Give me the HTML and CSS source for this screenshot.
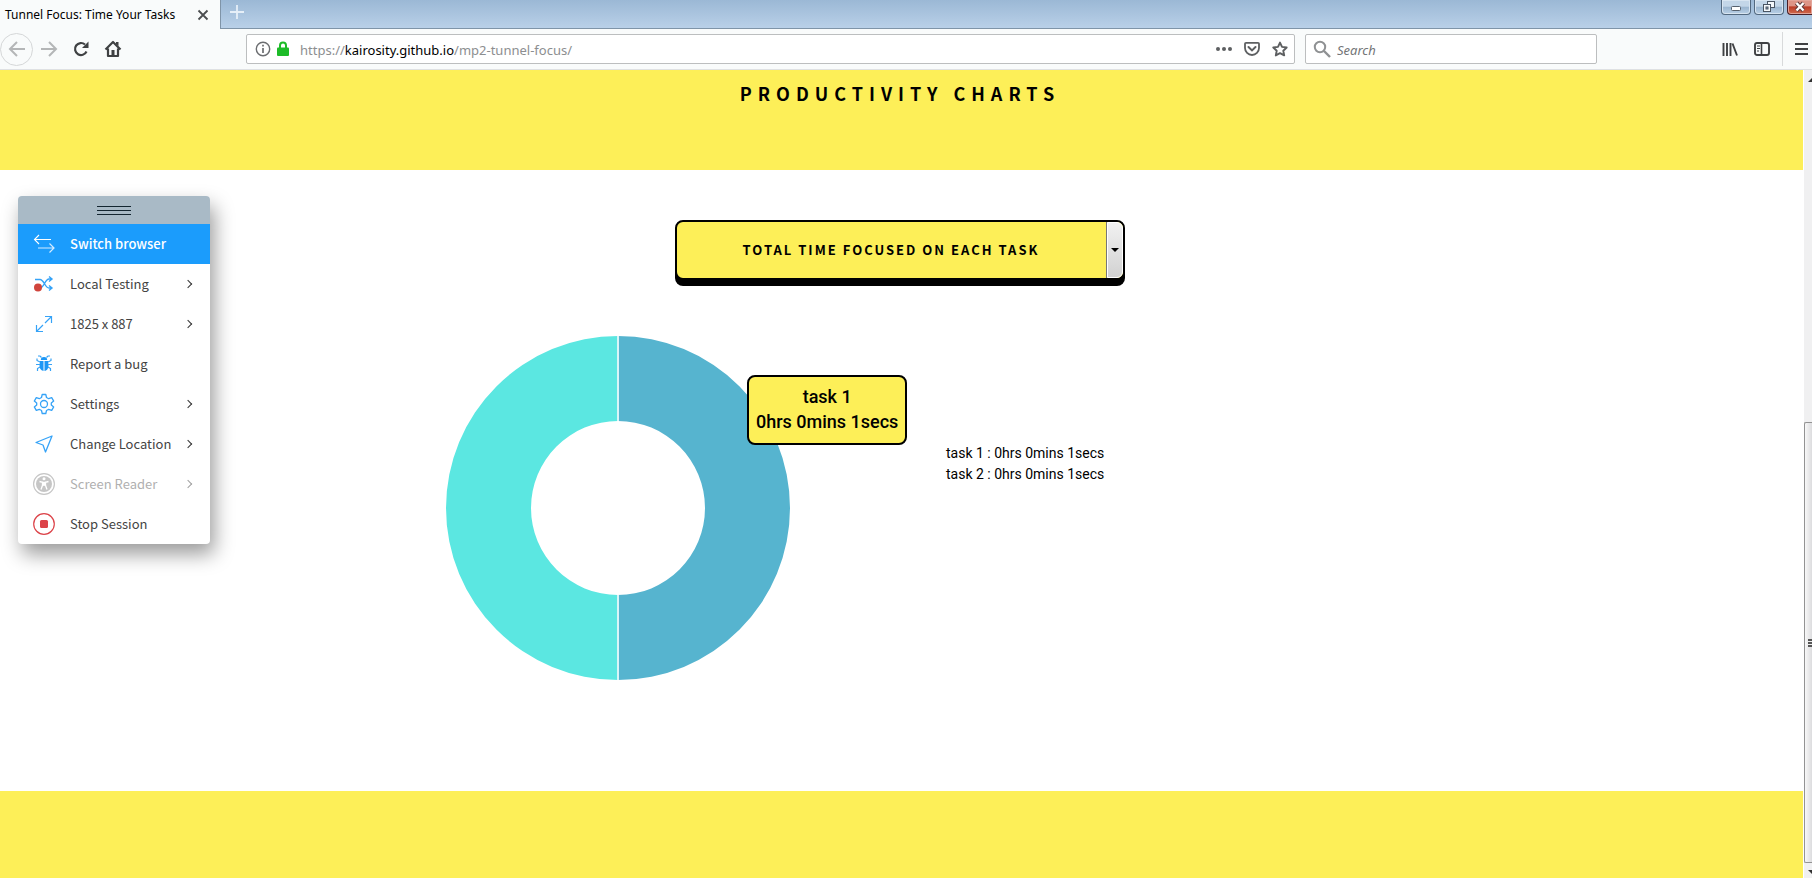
FILE: index.html
```html
<!DOCTYPE html>
<html lang="en">
<head>
<meta charset="utf-8">
<title>Tunnel Focus: Time Your Tasks</title>
<link rel="stylesheet" href="styles.css">
</head>
<body>
<header class="browser">
  <div class="tabbar">
    <div class="tab">
      <span class="tab-title">Tunnel Focus: Time Your Tasks</span>
      <button class="icon-btn" aria-label="Close tab"><svg width="12" height="12" viewBox="0 0 12 12"><path d="M1.5 1.5l9 9M10.5 1.5l-9 9" stroke="#4b4d4f" stroke-width="1.8" fill="none"/></svg></button>
    </div>
    <button class="icon-btn new-tab" aria-label="New tab"><svg width="16" height="16" viewBox="0 0 16 16"><path d="M8 1v14M1 8h14" stroke="#e6eff8" stroke-width="1.8"/></svg></button>
    <div class="window-controls">
      <button class="win" aria-label="Minimize"><svg width="12" height="14" viewBox="0 0 12 14"><rect x="1.500" y="6.500" width="9" height="4" rx="1" fill="#fff" stroke="#56616e"/></svg></button>
      <button class="win" aria-label="Restore"><svg width="14" height="14" viewBox="0 0 14 14"><g fill="#f4f8fb" stroke="#4a5563"><rect x="5.500" y="1.500" width="7" height="6"/><rect x="1.500" y="4.500" width="7" height="7"/><rect x="4" y="7" width="2" height="2" fill="#8ea6be"/></g></svg></button>
      <button class="win win-close" aria-label="Close"><svg width="14" height="14" viewBox="0 0 14 14"><path d="M3.500 3l7 7.500M10.500 3l-7 7.500" stroke="#5d3a3a" stroke-width="4.200"/><path d="M3.500 3l7 7.500M10.500 3l-7 7.500" stroke="#fff" stroke-width="2.400"/></svg></button>
    </div>
  </div>
  <div class="toolbar">
    <nav class="nav-buttons" aria-label="Browser navigation">
      <button class="icon-btn back" aria-label="Back"><svg width="18" height="18" viewBox="0 0 18 18"><path d="M17 9H2M9 2L2 9l7 7" fill="none" stroke="#b4b6b7" stroke-width="2"/></svg></button>
      <button class="icon-btn" aria-label="Forward"><svg width="18" height="18" viewBox="0 0 18 18"><path d="M1 9h15M9 2l7 7-7 7" fill="none" stroke="#b4b6b7" stroke-width="2"/></svg></button>
      <button class="icon-btn" aria-label="Reload"><svg width="18" height="18" viewBox="0 0 18 18"><path d="M14.500 11.500A6 6 0 1 1 13 4.500" fill="none" stroke="#3f4143" stroke-width="2.200"/><path d="M16.500 1.500V8H10z" fill="#3f4143"/></svg></button>
      <button class="icon-btn" aria-label="Home"><svg width="18" height="18" viewBox="0 0 18 18"><path d="M1.500 9.500L9 2l7.500 7.500M4 8.500V16h10V8.500" fill="none" stroke="#3f4143" stroke-width="2.200" stroke-linejoin="round"/><path d="M12 2h2.500v4L12 4zM7.500 10h3v6h-3z" fill="#3f4143"/></svg></button>
    </nav>
    <div class="field address">
      <svg width="16" height="16" viewBox="0 0 16 16"><circle cx="8" cy="8" r="6.700" fill="none" stroke="#6b6d70" stroke-width="1.400"/><path d="M8 7v5M8 3.800v1.800" stroke="#6b6d70" stroke-width="1.700"/></svg>
      <svg width="12" height="16" viewBox="0 0 12 16"><path d="M3 8V4.500a3 3 0 0 1 6 0V8" fill="none" stroke="#1dbb28" stroke-width="2"/><rect y="6.500" width="12" height="8.500" rx="1" fill="#1dbb28"/></svg>
      <a class="url" href="https://kairosity.github.io/mp2-tunnel-focus/">https://<span class="host">kairosity.github.io</span>/mp2-tunnel-focus/</a>
      <button class="icon-btn" aria-label="Page actions"><svg width="16" height="16" viewBox="0 0 16 16"><g fill="#5d5f61"><circle cx="2" cy="8" r="2"/><circle cx="8" cy="8" r="2"/><circle cx="14" cy="8" r="2"/></g></svg></button>
      <button class="icon-btn" aria-label="Save to Pocket"><svg width="16" height="16" viewBox="0 0 16 16"><path d="M2 1.800h12q1 0 1 1V7A7 7 0 0 1 1 7V2.800q0-1 1-1z" fill="none" stroke="#5d5f61" stroke-width="1.800"/><path d="M4.500 6L8 9.400 11.500 6" fill="none" stroke="#5d5f61" stroke-width="2" stroke-linecap="round"/></svg></button>
      <button class="icon-btn" aria-label="Bookmark"><svg width="16" height="16" viewBox="0 0 16 16"><path d="M8 1.600l2 4.300 4.700.6-3.400 3.200.9 4.700L8 12.100l-4.200 2.300.9-4.700L1.300 6.500 6 5.900z" fill="none" stroke="#5d5f61" stroke-width="1.900" stroke-linejoin="round"/></svg></button>
    </div>
    <label class="field search">
      <svg width="18" height="18" viewBox="0 0 18 18"><circle cx="7" cy="7" r="5.200" fill="none" stroke="#8f9193" stroke-width="2"/><path d="M11 11l6 6" stroke="#8f9193" stroke-width="2.400"/></svg>
      <input type="search" placeholder="Search" aria-label="Search">
    </label>
    <div class="tools">
      <button class="icon-btn" aria-label="Library"><svg width="16" height="16" viewBox="0 0 16 16"><path d="M1.500 2v13M5 2v13M8.500 2v13M10.500 2.500l4.500 12" stroke="#3f4143" stroke-width="1.900" fill="none"/></svg></button>
      <button class="icon-btn" aria-label="Sidebars"><svg width="16" height="16" viewBox="0 0 16 16"><rect x="1" y="2" width="14" height="12" rx="2" fill="none" stroke="#3f4143" stroke-width="1.900"/><path d="M7.500 2v12" stroke="#3f4143" stroke-width="1.600"/><path d="M3 5h3M3 7.500h3M3 10h2" stroke="#3f4143"/></svg></button>
      <span class="divider"></span>
      <button class="icon-btn" aria-label="Menu"><svg width="13" height="14" viewBox="0 0 13 14"><path d="M0 2h13M0 7h13M0 12h13" stroke="#3f4143" stroke-width="2"/></svg></button>
    </div>
  </div>
</header>

<div class="viewport">
  <main class="page">
    <section class="banner"><h1>PRODUCTIVITY CHARTS</h1></section>
    <section class="charts">
      <div class="picker">
        <select aria-label="Chart">
          <option>TOTAL TIME FOCUSED ON EACH TASK</option>
        </select>
        <span class="picker-arrow"></span>
      </div>
      <div class="chart-row">
        <div class="chart">
          <svg class="donut" viewBox="0 0 344 344" role="img" aria-label="Time per task">
            <path d="M172 0a172 172 0 0 1 0 344v-85a87 87 0 0 0 0-174z" fill="#56b4cf"/>
            <path d="M172 0a172 172 0 0 0 0 344v-85a87 87 0 0 1 0-174z" fill="#5be7e1"/>
            <path d="M172 0v85M172 259v85" stroke="#d9f5f8" stroke-width="2"/>
          </svg>
          <div class="tooltip">task 1<br>0hrs 0mins 1secs</div>
        </div>
        <ul class="legend">
          <li>task 1 : 0hrs 0mins 1secs</li>
          <li>task 2 : 0hrs 0mins 1secs</li>
        </ul>
      </div>
    </section>
    <footer class="page-footer"></footer>
  </main>
  <div class="scrollbar">
    <span class="arrow-up"></span>
    <div class="track-space"></div>
    <div class="thumb"><span class="grip"></span></div>
    <span class="arrow-down"></span>
  </div>

  <aside class="session">
    <div class="handle"><span class="handle-lines"></span></div>
    <button class="item active"><svg width="22" height="20" viewBox="0 0 22 20"><path d="M18 5.500H2M6 1L1.500 5.500 6 10" fill="none" stroke="#fff" stroke-width="1.100"/><path d="M5 14h16M16.500 9.500L21 14l-4.500 4.500" fill="none" stroke="#d4ebff" stroke-width="1.200"/></svg><span class="label">Switch browser</span></button>
    <button class="item"><svg width="22" height="20" viewBox="0 0 22 20"><path d="M2 5.500h5c4 0 5 8.500 9 8.500h3M19 5h-3c-4 0-5 9-9 9M16 2.500L19 5l-3 2.500M16 11.500l3 2.500-3 2.500" fill="none" stroke="#36a3f7" stroke-width="1.400"/><circle cx="5" cy="13.500" r="4" fill="#d0443c"/></svg><span class="label">Local Testing</span><span class="chevron"></span></button>
    <button class="item"><svg width="22" height="20" viewBox="0 0 22 20"><path d="M12 9l6.500-6.500M12 2.500h6.500V9M10 11l-6.500 6.500M3.500 11v6.500H10" fill="none" stroke="#36a3f7" stroke-width="1.200"/></svg><span class="label">1825 x 887</span><span class="chevron"></span></button>
    <button class="item"><svg width="22" height="20" viewBox="0 0 22 20"><path d="M7.800 6a3.200 3 0 0 1 6.400 0zM7 7h3.500v10C7.500 16.500 6.500 14 6.500 11zM15 7h-3.500v10c3-.5 4-3 4-6z" fill="#1d97f5"/><path d="M8.500 3.500L7 2H5M13.500 3.500L15 2h2M7 8L4 6.500V4.500M15 8l3-1.500V4.500M3 10.500h4M19 10.500h-4M7 13l-2.500 1.500V17M15 13l2.500 1.500V17" fill="none" stroke="#36a3f7" stroke-width="1.200"/></svg><span class="label">Report a bug</span></button>
    <button class="item"><svg width="22" height="22" viewBox="0 0 22 22"><path d="M8.500 4.500L9.200 1.500h3.600l.7 3 2.200 1.200 3-1 2 3.400-2.400 2v1.800l2.400 2-2 3.400-3-1-2.200 1.200-.7 3H9.200l-.7-3-2.200-1.200-3 1-2-3.400 2.400-2v-1.800l-2.400-2 2-3.400 3 1z" fill="none" stroke="#36a3f7" stroke-width="1.300" stroke-linejoin="round"/><circle cx="11" cy="11" r="3.500" fill="none" stroke="#36a3f7" stroke-width="1.300"/></svg><span class="label">Settings</span><span class="chevron"></span></button>
    <button class="item"><svg width="22" height="20" viewBox="0 0 22 20"><path d="M19 2L12.500 18 10 11 3 8.500z" fill="none" stroke="#36a3f7" stroke-width="1.300" stroke-linejoin="round"/></svg><span class="label">Change Location</span><span class="chevron"></span></button>
    <button class="item" disabled><svg width="22" height="22" viewBox="0 0 22 22"><circle cx="11" cy="11" r="10.400" fill="none" stroke="#c6c6c6" stroke-width="1.200"/><circle cx="11" cy="11" r="8" fill="#c6c6c6"/><circle cx="11" cy="5.800" r="1.500" fill="#fff"/><path d="M6.500 8.500l3 .8v3L8 16.500M15.500 8.500l-3 .8v3l1.500 4.200" fill="none" stroke="#fff" stroke-width="1.300"/><path d="M9 8.800h4v4H9z" fill="#fff"/></svg><span class="label">Screen Reader</span><span class="chevron"></span></button>
    <button class="item"><svg width="22" height="22" viewBox="0 0 22 22"><circle cx="11" cy="11" r="10.300" fill="none" stroke="#dc4349" stroke-width="1.200"/><rect x="7" y="7" width="8" height="8" rx="1.500" fill="#dc4349"/></svg><span class="label">Stop Session</span></button>
  </aside>
</div>
</body>
</html>
```
FILE: styles.css
```css
* { box-sizing: border-box; }

body {
  margin: 0;
  min-height: 100vh;
  display: flex;
  flex-direction: column;
  overflow: hidden;
  background: #fff;
  color: #000;
  font-family: Roboto, sans-serif;
}

button {
  margin: 0;
  padding: 0;
  border: 0;
  background: none;
  font: inherit;
}

svg { display: block; flex: none; }

/* Browser chrome */
.browser {
  font-family: "Noto Sans", sans-serif;
  border-bottom: 1px solid #dfe1e3;
  background: #f9fbfb;
}

.tabbar {
  display: flex;
  height: 29px;
  border-bottom: 1px solid #7f94a8;
  background: linear-gradient(#9bb8d5, #b9d0e8);
}

.tab {
  display: flex;
  align-items: center;
  justify-content: space-between;
  width: 221px;
  height: 29px;
  padding: 0 11px 0 5px;
  border-right: 1px solid #7f94a8;
  background: #f9fbfb;
  font-size: 12px;
  white-space: nowrap;
}

.icon-btn {
  display: flex;
  align-items: center;
  justify-content: center;
}

.new-tab { align-self: flex-start; padding: 4px 8px; }

.window-controls {
  display: flex;
  gap: 3px;
  margin-left: auto;
  overflow: hidden;
}

.win {
  display: flex;
  align-items: center;
  justify-content: center;
  width: 30px;
  height: 15px;
  border: 1px solid #53697f;
  border-top: 0;
  border-radius: 0 0 4px 4px;
  background: linear-gradient(#c3d6e8 45%, #9ab5cf 50%, #b9d0e6);
  box-shadow: inset 0 0 0 1px #d8e5f1;
}

.win-close {
  width: 25px;
  border-color: #4a1f26;
  border-right: 0;
  border-radius: 0 0 0 4px;
  background: linear-gradient(#dd9486 40%, #bd3d27 50%, #cf6a4d);
  box-shadow: inset 0 0 0 1px #e3a498;
}

.toolbar {
  display: flex;
  align-items: center;
  height: 40px;
}

.nav-buttons {
  display: flex;
  align-items: center;
  gap: 14px;
  width: 246px;
}

.back {
  width: 33px;
  height: 33px;
  margin-right: -7px;
  border: 1px solid #d5d7d8;
  border-radius: 50%;
}

.field {
  display: flex;
  align-items: center;
  height: 30px;
  border: 1px solid #bcbebf;
  border-radius: 2px;
  background: #fff;
  font-size: 13px;
}

.address {
  flex: 1;
  gap: 12px;
  padding: 0 6px 0 8px;
}

.address > svg + svg { margin-left: -6px; }

.url {
  flex: 1;
  margin-left: -1px;
  padding-top: 2px;
  color: #8c8e90;
  text-decoration: none;
}

.host { color: #000; }

.search {
  gap: 6px;
  width: 292px;
  margin-left: 10px;
  padding: 0 7px;
}

.search input {
  flex: 1;
  min-width: 0;
  padding: 2px 0 0;
  border: 0;
  outline: 0;
  background: none;
  font: inherit;
}

.search input::placeholder { color: #737577; font-style: italic; }

.tools {
  display: flex;
  align-items: center;
  gap: 16px;
  margin-left: 125px;
  padding-right: 4px;
}

.divider {
  width: 1px;
  height: 34px;
  margin: 0 -4px;
  background: #d8dadb;
}

/* Page */
.viewport {
  position: relative;
  display: flex;
  flex: 1;
}

.page {
  display: flex;
  flex: 1;
  flex-direction: column;
}

.banner {
  height: 100px;
  padding: 8px 3px 0 0;
  background: #fdef58;
  text-align: center;
}

.banner h1 {
  margin: 0;
  font-family: "Noto Sans CJK SC", sans-serif;
  font-size: 18px;
  font-weight: 700;
  line-height: 30px;
  letter-spacing: 6px;
}

.charts { flex: 1; padding: 50px 3px 0 0; }

.picker {
  position: relative;
  width: 450px;
  margin: 0 auto;
  border: 2px solid #000;
  border-radius: 8px;
  background: #fdef58;
  box-shadow: 0 6px 0 #000;
}

.picker select {
  display: block;
  width: 100%;
  height: 56px;
  padding: 0 18px 2px 0;
  border: 0;
  appearance: none;
  background: none;
  color: #000;
  font-family: "Noto Sans CJK SC", sans-serif;
  font-size: 13px;
  font-weight: 700;
  letter-spacing: 2px;
  text-align: center;
  text-align-last: center;
}

.picker-arrow {
  position: absolute;
  top: 0;
  right: 0;
  bottom: 0;
  display: flex;
  align-items: center;
  justify-content: center;
  width: 16px;
  border: 1px solid #fff;
  border-radius: 0 6px 6px 0;
  background: linear-gradient(#f1f1f1, #d2d2d2);
  box-shadow: -1px 0 0 #777;
  pointer-events: none;
}

.picker-arrow::before {
  content: "";
  border: 4px solid transparent;
  border-top-color: #000;
  border-bottom: 0;
}

.chart-row {
  display: flex;
  align-items: flex-start;
  gap: 156px;
  padding: 56px 0 0 446px;
}

.chart { position: relative; }

.donut { width: 344px; height: 344px; }

.tooltip {
  position: absolute;
  top: 39px;
  left: 301px;
  padding: 7px 7px 9px;
  border: 2px solid #000;
  border-radius: 8px;
  background: #fdef58;
  font-size: 18px;
  font-weight: 500;
  line-height: 25px;
  text-align: center;
  white-space: nowrap;
}

.legend {
  margin: 107px 0 0;
  padding: 0;
  list-style: none;
  font-size: 14px;
  line-height: 21px;
}

.page-footer { height: 87px; background: #fdef58; }

/* Scrollbar */
.scrollbar {
  display: flex;
  flex-direction: column;
  align-items: flex-end;
  width: 9px;
  border-left: 1px solid #fff;
  background: #f0f0f1;
}

.arrow-up,
.arrow-down {
  width: 4px;
  height: 4px;
  background: #333;
}

.arrow-up { margin-top: 8px; clip-path: polygon(100% 0, 100% 100%, 0 100%); }
.arrow-down { margin: 7px 0 4px; clip-path: polygon(0 0, 100% 0, 100% 100%); }

.track-space { flex: 341; }

.thumb {
  display: flex;
  flex: 440;
  align-items: center;
  justify-content: flex-end;
  width: 100%;
  border: 1px solid #939393;
  border-right: 0;
  border-radius: 2px 0 0 2px;
  background: linear-gradient(90deg, #f8f8f8, #dcdcde);
}

.grip {
  width: 4px;
  height: 8px;
  background: repeating-linear-gradient(#555 0 2px, #eee 2px 3px);
}

/* Floating session menu */
.session {
  position: absolute;
  top: 126px;
  left: 18px;
  width: 192px;
  border-radius: 4px;
  background: #fff;
  box-shadow: 4px 10px 20px rgba(0, 0, 0, 0.4);
  overflow: hidden;
  font-family: "Noto Sans CJK SC", sans-serif;
  font-size: 13px;
  font-weight: 400;
}

.handle {
  display: flex;
  align-items: center;
  justify-content: center;
  height: 28px;
  background: #a9bac6;
}

.handle-lines {
  width: 34px;
  height: 9px;
  border: solid #132530;
  border-width: 1px 0;
  background: linear-gradient(#132530, #132530) center / 100% 1px no-repeat;
}

.item {
  display: flex;
  align-items: center;
  gap: 15px;
  width: 100%;
  height: 40px;
  padding: 0 19px 0 15px;
  color: #444;
  text-align: left;
}

.item.active { background: #1b9cfc; color: #fff; font-weight: 500; }
.item:disabled { color: #b0b0b0; }

.label { flex: 1; min-width: 0; padding-bottom: 2px; white-space: nowrap; }

.chevron {
  flex: none;
  width: 6px;
  height: 6px;
  border: solid #333;
  border-width: 1px 1px 0 0;
  transform: rotate(45deg);
}

.item:disabled .chevron { border-color: #a0a0a0; }
```
